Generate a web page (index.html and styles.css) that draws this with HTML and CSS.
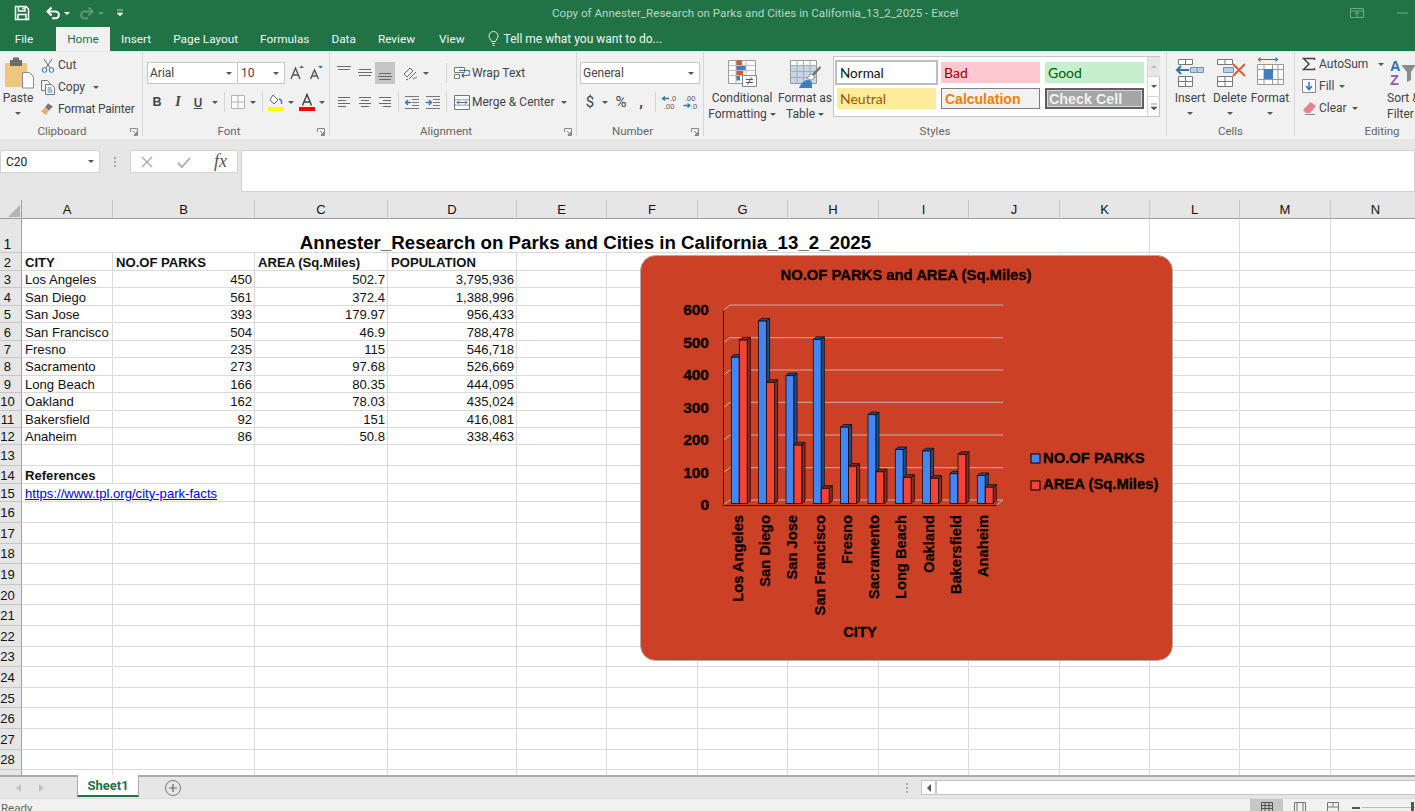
FILE: index.html
```html
<!DOCTYPE html>
<html lang="en">
<head>
<meta charset="utf-8">
<title>Excel</title>
<link rel="stylesheet" href="styles.css">
</head>
<body>
<header class="titlebar">
  <div class="qat">
    <svg class="save" width="16" height="16" viewBox="0 0 16 16"><path d="M1.5 1.5h10.5l2.5 2.5v10.500h-13zM4.500 2v4h6.500V2M4 14.500V9.500h8v5"/><path d="M9 2.500v2"/></svg>
    <svg class="undo" width="16" height="14" viewBox="0 0 16 14"><path d="M2.500 5.500h8a3.300 3.300 0 0 1 0 6.800H7M6.500 1.500l-4 4 4 4"/></svg>
    <b class="caret white"></b>
    <svg class="redo" width="16" height="14" viewBox="0 0 16 14"><path d="M13.500 5.500h-8a3.300 3.300 0 0 0 0 6.800H9M9.500 1.500l4 4-4 4"/></svg>
    <b class="caret dim"></b>
    <svg class="custom" width="8" height="8" viewBox="0 0 8 8"><path d="M1 1h6M1 4h6l-3 3z"/></svg>
  </div>
  <div class="doc-title">Copy of Annester_Research on Parks and Cities in California_13_2_2025 - Excel</div>
  <div class="win">
    <svg width="14" height="10" viewBox="0 0 14 10"><path d="M.5.5h13v9H.5zM.5 3h13M7 9V4.500M5 6l2-2 2 2"/></svg>
    <svg width="11" height="3" viewBox="0 0 11 3"><path d="M0 1h11"/></svg>
  </div>
</header>

<nav class="tabs">
  <span class="tab file">File</span>
  <span class="tab active">Home</span>
  <span class="tab">Insert</span>
  <span class="tab">Page Layout</span>
  <span class="tab">Formulas</span>
  <span class="tab">Data</span>
  <span class="tab">Review</span>
  <span class="tab view">View</span>
  <span class="tell">
    <svg width="11" height="16" viewBox="0 0 11 16"><path d="M3.500 10.500C3 8.500 1 7.500 1 5a4.500 4.500 0 0 1 9 0c0 2.500-2 3.500-2.500 5.500zM4 12.500h3M4.500 14.500h2"/></svg>
    Tell me what you want to do...
  </span>
</nav>

<section class="ribbon">
  <div class="group g-clip">
    <div class="body">
      <div class="big paste">
        <svg width="30" height="33" viewBox="0 0 30 33"><rect x="0" y="6" width="22" height="24" rx="1" fill="#efc67e"/><rect x="5" y="3" width="12" height="6" fill="#6d6d6d"/><rect x="8" y="0.500" width="6" height="4" fill="#6d6d6d"/><path d="M17.500 15.500h7l4 4v11.500h-11z" fill="#fff" stroke="#8a8a8a"/></svg>
        <span>Paste</span>
        <b class="caret"></b>
      </div>
      <div class="smalls">
        <div class="small"><svg width="14" height="15" viewBox="0 0 14 15"><path d="M3 1l6 9M11 1l-6 9" stroke="#666" fill="none"/><circle cx="3.500" cy="12" r="2.300" fill="none" stroke="#2e75b6"/><circle cx="10.500" cy="12" r="2.300" fill="none" stroke="#2e75b6"/></svg><span>Cut</span></div>
        <div class="small"><svg width="14" height="15" viewBox="0 0 14 15"><path d="M.5.5h6l2 2v2M.5.5v10h4" fill="none" stroke="#777"/><path d="M4.500 4.500h6l3 3v7h-9z" fill="#fff" stroke="#777"/><path d="M6.500 8h4M6.500 10h5M6.500 12h5" stroke="#3d7fc1"/></svg><span>Copy</span><b class="caret gap5"></b></div>
        <div class="small"><svg width="14" height="14" viewBox="0 0 14 14"><path d="M7 1.500l5 3-4 4-4-3z" fill="#777"/><path d="M4 5.500l4 3-3 4.500L0 9.500z" fill="#e3b268"/></svg><span class="tight">Format Painter</span></div>
      </div>
    </div>
    <div class="label lau">Clipboard<svg class="launch" width="8" height="8" viewBox="0 0 8 8"><path d="M.5 4V.5H7.500V7.500H4M3 3l3.500 3.500M6.500 4v2.500H4"/></svg></div>
  </div>

  <div class="group g-font">
    <div class="body column">
      <div class="row">
        <div class="select s-font">Arial<b class="caret"></b></div>
        <div class="select s-size">10<b class="caret"></b></div>
        <svg class="gap3" width="18" height="18" viewBox="0 0 18 18"><path d="M3 15L7.500 4 12 15M5 11h5" fill="none" stroke="#555" stroke-width="1.400"/><path d="M11 4l2.500-2.500L16 4z" fill="#2e75b6"/></svg>
        <svg class="gap1" width="18" height="18" viewBox="0 0 18 18"><path d="M3.500 15L7.500 6 11.500 15M5 12h5" fill="none" stroke="#555" stroke-width="1.400"/><path d="M11 2h5l-2.500 2.500z" fill="#2e75b6"/></svg>
      </div>
      <div class="row">
        <span class="ib bold">B</span>
        <span class="ib ital gap1">I</span>
        <span class="ib under">U</span>
        <b class="caret"></b>
        <i class="vsep"></i>
        <svg width="16" height="16" viewBox="0 0 16 16"><path d="M1.500 1.500h13v13h-13zM8 1.500v13M1.500 8h13" fill="#fafafa" stroke="#b5b5b5"/></svg>
        <b class="caret"></b>
        <i class="vsep"></i>
        <svg width="16" height="18" viewBox="0 0 16 18"><path d="M5 2l5 5-4 4-4-4z" fill="#fff" stroke="#666"/><path d="M11 6c2 0 3 2 2.500 5" fill="none" stroke="#2e75b6" stroke-width="1.400"/><rect y="14" width="16" height="4" fill="#ff0"/></svg>
        <b class="caret"></b>
        <svg class="gap5" width="16" height="18" viewBox="0 0 16 18"><path d="M3.500 12.500L8 1.500l4.500 11M5 9h6" fill="none" stroke="#444" stroke-width="1.500"/><rect y="14" width="16" height="4" fill="#f00"/></svg>
        <b class="caret"></b>
      </div>
    </div>
    <div class="label lau">Font<svg class="launch" width="8" height="8" viewBox="0 0 8 8"><path d="M.5 4V.5H7.500V7.500H4M3 3l3.500 3.500M6.500 4v2.500H4"/></svg></div>
  </div>

  <div class="group g-align">
    <div class="body column">
      <div class="row">
        <span class="ib"><svg class="ln" width="16" height="16" viewBox="0 0 16 16"><path d="M1 1.500h14M2 4.500h12"/></svg></span>
        <span class="ib gap1"><svg class="ln" width="16" height="16" viewBox="0 0 16 16"><path d="M2 4.500h12M1 7.500h14M2 10.500h12"/></svg></span>
        <span class="ib on"><svg class="ln" width="16" height="16" viewBox="0 0 16 16"><path d="M2 8.500h12M1 11.500h14M2 14.500h12"/></svg></span>
        <svg class="gap7 ln" width="18" height="16" viewBox="0 0 18 16"><path d="M2 9l6-6 3 3-6 6zM7 14l7-7M11 14l4-2M4 15l2-1"/></svg>
        <b class="caret gap3"></b>
        <i class="vsep v16"></i>
        <svg width="16" height="16" viewBox="0 0 16 16"><path d="M.5 2.500h10v5h-10zM.5 9.500h5v4h-5z" fill="#fff" stroke="#777"/><path d="M5 5.500h8.500a2 2 0 0 1 0 5H8M10 8.500l-2 2 2 2" fill="none" stroke="#2e75b6" stroke-width="1.200"/></svg>
        <span class="gap2">Wrap Text</span>
      </div>
      <div class="row">
        <span class="ib"><svg class="ln" width="16" height="14" viewBox="0 0 16 14"><path d="M2 2.500h12M2 5.500h8M2 8.500h12M2 11.500h8"/></svg></span>
        <span class="ib gap1"><svg class="ln" width="16" height="14" viewBox="0 0 16 14"><path d="M2 2.500h12M4 5.500h8M2 8.500h12M4 11.500h8"/></svg></span>
        <span class="ib"><svg class="ln" width="16" height="14" viewBox="0 0 16 14"><path d="M2 2.500h12M6 5.500h8M2 8.500h12M6 11.500h8"/></svg></span>
        <i class="vsep v3"></i>
        <span class="ib"><svg width="16" height="14" viewBox="0 0 16 14"><path d="M1 1.500h14M8 4.500h7M8 7.500h7M8 10.500h7M1 13.500h14" stroke="#777" fill="none"/><path d="M7 7.500H1.500M4 5L1.500 7.500 4 10" fill="none" stroke="#2e75b6" stroke-width="1.300"/></svg></span>
        <span class="ib gap1"><svg width="16" height="14" viewBox="0 0 16 14"><path d="M1 1.500h14M8 4.500h7M8 7.500h7M8 10.500h7M1 13.500h14" stroke="#777" fill="none"/><path d="M1 7.500h5.500M4 5l2.500 2.500L4 10" fill="none" stroke="#2e75b6" stroke-width="1.300"/></svg></span>
        <i class="vsep v2"></i>
        <svg width="16" height="15" viewBox="0 0 16 15"><path d="M.5.500h15v14H.5zM.5 5h15M.5 10h15" fill="#fff" stroke="#777"/><rect x="2" y="5.500" width="12" height="4" fill="#fff"/><path d="M3 7.500h10M5 5.500l-2 2 2 2M11 5.500l2 2-2 2" fill="none" stroke="#2e75b6"/></svg>
        <span class="gap2">Merge &amp; Center</span>
        <b class="caret gap7"></b>
      </div>
    </div>
    <div class="label lau">Alignment<svg class="launch" width="8" height="8" viewBox="0 0 8 8"><path d="M.5 4V.5H7.500V7.500H4M3 3l3.500 3.500M6.500 4v2.500H4"/></svg></div>
  </div>

  <div class="group g-num">
    <div class="body column">
      <div class="row"><div class="select s-num">General<b class="caret"></b></div></div>
      <div class="row numrow">
        <span class="ib16 big-glyph">$</span>
        <b class="caret"></b>
        <span class="ib16 big-glyph gap5">%</span>
        <span class="ib16 comma gap4">,</span>
        <i class="vsep"></i>
        <svg width="16" height="16" viewBox="0 0 16 16"><text x="9" y="7" class="deci">.0</text><text x="3" y="14.500" class="deci">.00</text><path d="M8 4.500H1.500M4 2.500l-2.500 2 2.500 2" fill="none" stroke="#2e75b6" stroke-width="1.300"/></svg>
        <svg class="gap5" width="16" height="16" viewBox="0 0 16 16"><text x="3" y="7" class="deci">.00</text><text x="9" y="14.500" class="deci">.0</text><path d="M1.500 11.500H8M5.500 9.500l2.500 2-2.500 2" fill="none" stroke="#2e75b6" stroke-width="1.300"/></svg>
      </div>
    </div>
    <div class="label lau">Number<svg class="launch" width="8" height="8" viewBox="0 0 8 8"><path d="M.5 4V.5H7.500V7.500H4M3 3l3.500 3.500M6.500 4v2.500H4"/></svg></div>
  </div>

  <div class="group g-styles">
    <div class="body">
      <div class="big w-cf">
        <svg width="32" height="33" viewBox="0 0 32 33"><path d="M2.500 3.500h27v23h-27z" fill="#fff" stroke="#999"/><rect x="10" y="3.500" width="6" height="5" fill="#d9572d"/><rect x="10" y="8.500" width="10" height="5" fill="#3f7fc1"/><rect x="10" y="13.500" width="7" height="5" fill="#d9572d"/><rect x="10" y="18.500" width="4" height="5" fill="#3f7fc1"/><path d="M10 3.500v23M20 3.500v23M2.500 8.500h27M2.500 13.500h27M2.500 18.500h27" stroke="#bbb" fill="none"/><path d="M16.500 18.500h14v11h-14z" fill="#fff" stroke="#888"/><path d="M20 22.500h7M20 25.500h7M25.500 20.500l-4 7" stroke="#555" fill="none"/></svg>
        <span>Conditional</span>
        <span>Formatting<b class="caret gap3"></b></span>
      </div>
      <div class="big w-fat">
        <svg width="32" height="33" viewBox="0 0 32 33"><path d="M1.500 3.500h26v23h-26z" fill="#fff" stroke="#999"/><path d="M2 9h25v17H2z" fill="#c5d6ea"/><path d="M1.500 8.500h26M1.500 14.500h26M1.500 20.500h26M8 3.500v23M14.500 3.500v23M21 3.500v23" stroke="#aaa" fill="none"/><path d="M31 9l-8 8 2 2 7-8z" fill="#777"/><path d="M23 17c-3 1-3 3-5 4l3 2c3 0 5-2 4-4z" fill="#fff" stroke="#888"/><path d="M10 31c2-5 5-8 9-8 3 0 4 2 4 4v4z" fill="#3f7fc1"/></svg>
        <span>Format as</span>
        <span>Table<b class="caret gap3"></b></span>
      </div>
      <div class="gallery">
        <div class="cells">
          <div class="st normal">Normal</div>
          <div class="st bad">Bad</div>
          <div class="st good">Good</div>
          <div class="st neutral">Neutral</div>
          <div class="st calc">Calculation</div>
          <div class="st check">Check Cell</div>
        </div>
        <div class="scroll">
          <div class="sb up"><b class="caret up-c"></b></div>
          <div class="sb"><b class="caret"></b></div>
          <div class="sb"><svg width="8" height="8" viewBox="0 0 8 8"><path d="M1 1h6M1 4h6L4 7z" fill="#555" stroke="#555" stroke-width=".6"/></svg></div>
        </div>
      </div>
    </div>
    <div class="label">Styles</div>
  </div>

  <div class="group g-cells">
    <div class="body">
      <div class="big w-cell">
        <svg width="30" height="33" viewBox="0 0 30 33"><path d="M3.500 2.500h14v5h-14zM10.500 2.500v5M3.500 19.500h14v10h-14zM10.500 19.500v10M3.500 24.500h14" fill="#fff" stroke="#777"/><path d="M15.500 10.500h13v5h-13zM22 10.500v5" fill="#b8cfe4" stroke="#6f93b5"/><path d="M14 13H2M6 9l-4 4 4 4" fill="none" stroke="#2e75b6" stroke-width="2"/></svg>
        <span>Insert</span><b class="caret"></b>
      </div>
      <div class="big w-cell">
        <svg width="30" height="33" viewBox="0 0 30 33"><path d="M2.500 2.500h15v5h-15zM10 2.500v5M2.500 19.500h15v10h-15zM10 19.500v10M2.500 24.500h15" fill="#fff" stroke="#777"/><path d="M8.500 10.500h10v5h-10z" fill="#b8cfe4" stroke="#6f93b5"/><path d="M18 7l12 12M30 7L18 19" fill="none" stroke="#d9572d" stroke-width="1.800"/></svg>
        <span>Delete</span><b class="caret"></b>
      </div>
      <div class="big w-cell">
        <svg width="30" height="33" viewBox="0 0 30 33"><path d="M3 2.500h20M6 .5L3 2.500l3 2M20 .5l3 2-3 2" fill="none" stroke="#2e75b6"/><path d="M2.500 7.500h26v20h-26zM2.500 12.500h26M2.500 22.500h26M9 7.500v20M17.500 7.500v20M23 7.500v20" fill="#fff" stroke="#999"/><rect x="9" y="12" width="9" height="10" fill="#3f7fc1"/></svg>
        <span>Format</span><b class="caret"></b>
      </div>
    </div>
    <div class="label l-cells">Cells</div>
  </div>

  <div class="group g-edit">
    <div class="body">
      <div class="smalls e-smalls">
        <div class="small"><svg width="14" height="14" viewBox="0 0 14 14"><path d="M12.500 3V1.500h-11L7 7l-5.500 5.500h11V11" fill="none" stroke="#444" stroke-width="1.500"/></svg><span>AutoSum</span><b class="caret gap10"></b></div>
        <div class="small"><svg width="14" height="14" viewBox="0 0 14 14"><path d="M.5.5h13v13H.5z" fill="#fff" stroke="#888"/><path d="M7 3v7M4 7l3 3.500L10 7" fill="none" stroke="#2e75b6" stroke-width="1.500"/></svg><span>Fill</span><b class="caret gap2"></b></div>
        <div class="small"><svg width="14" height="14" viewBox="0 0 14 14"><path d="M8.500 1L14 5l-6 7H4L1 9z" fill="#e8808f"/><path d="M3 13.500h10" stroke="#888"/></svg><span>Clear</span><b class="caret gap2"></b></div>
      </div>
      <div class="big sort">
        <svg width="28" height="33" viewBox="0 0 28 33"><text x="3" y="14" class="az a">A</text><text x="3" y="28" class="az z">Z</text><path d="M15 8h13v1l-4 6v8l-4 2V15l-5-6z" fill="#8a8a8a"/></svg>
        <span>Sort &amp;</span>
        <span>Filter</span>
      </div>
    </div>
    <div class="label">Editing</div>
  </div>
</section>

<section class="formula">
  <div class="namebox">C20<b class="caret"></b></div>
  <div class="grip"><i></i><i></i><i></i></div>
  <div class="fxbox">
    <svg width="14" height="14" viewBox="0 0 14 14"><path d="M2 2l10 10M12 2L2 12" stroke="#aaa" stroke-width="1.400"/></svg>
    <svg width="14" height="14" viewBox="0 0 14 14"><path d="M1 8l4 4 8-9" fill="none" stroke="#aaa" stroke-width="1.800"/></svg>
    <span class="fx">fx</span>
  </div>
  <div class="input"></div>
</section>

<main class="sheet">
  <div class="hd corner"><svg width="13" height="13" viewBox="0 0 13 13"><path d="M12 0v12H0z" fill="#b4b4b4"/></svg></div>
  <div class="hd">A</div><div class="hd">B</div><div class="hd">C</div><div class="hd">D</div><div class="hd">E</div><div class="hd">F</div><div class="hd">G</div><div class="hd">H</div><div class="hd">I</div><div class="hd">J</div><div class="hd">K</div><div class="hd">L</div><div class="hd">M</div><div class="hd">N</div>

  <div class="rh rh1">1</div><div class="c title">Annester_Research on Parks and Cities in California_13_2_2025</div><i></i><i></i><i></i>
  <div class="rh">2</div><div class="c h">CITY</div><div class="c h">NO.OF PARKS</div><div class="c h">AREA (Sq.Miles)</div><div class="c h">POPULATION</div><i></i><i></i><i></i><i></i><i></i><i></i><i></i><i></i><i></i><i></i>
  <div class="rh">3</div><div class="c">Los Angeles</div><div class="c n">450</div><div class="c n">502.7</div><div class="c n">3,795,936</div><i></i><i></i><i></i><i></i><i></i><i></i><i></i><i></i><i></i><i></i>
  <div class="rh">4</div><div class="c">San Diego</div><div class="c n">561</div><div class="c n">372.4</div><div class="c n">1,388,996</div><i></i><i></i><i></i><i></i><i></i><i></i><i></i><i></i><i></i><i></i>
  <div class="rh">5</div><div class="c">San Jose</div><div class="c n">393</div><div class="c n">179.97</div><div class="c n">956,433</div><i></i><i></i><i></i><i></i><i></i><i></i><i></i><i></i><i></i><i></i>
  <div class="rh">6</div><div class="c">San Francisco</div><div class="c n">504</div><div class="c n">46.9</div><div class="c n">788,478</div><i></i><i></i><i></i><i></i><i></i><i></i><i></i><i></i><i></i><i></i>
  <div class="rh">7</div><div class="c">Fresno</div><div class="c n">235</div><div class="c n">115</div><div class="c n">546,718</div><i></i><i></i><i></i><i></i><i></i><i></i><i></i><i></i><i></i><i></i>
  <div class="rh">8</div><div class="c">Sacramento</div><div class="c n">273</div><div class="c n">97.68</div><div class="c n">526,669</div><i></i><i></i><i></i><i></i><i></i><i></i><i></i><i></i><i></i><i></i>
  <div class="rh">9</div><div class="c">Long Beach</div><div class="c n">166</div><div class="c n">80.35</div><div class="c n">444,095</div><i></i><i></i><i></i><i></i><i></i><i></i><i></i><i></i><i></i><i></i>
  <div class="rh">10</div><div class="c">Oakland</div><div class="c n">162</div><div class="c n">78.03</div><div class="c n">435,024</div><i></i><i></i><i></i><i></i><i></i><i></i><i></i><i></i><i></i><i></i>
  <div class="rh">11</div><div class="c">Bakersfield</div><div class="c n">92</div><div class="c n">151</div><div class="c n">416,081</div><i></i><i></i><i></i><i></i><i></i><i></i><i></i><i></i><i></i><i></i>
  <div class="rh">12</div><div class="c">Anaheim</div><div class="c n">86</div><div class="c n">50.8</div><div class="c n">338,463</div><i></i><i></i><i></i><i></i><i></i><i></i><i></i><i></i><i></i><i></i>
  <div class="rh">13</div><i></i><i></i><i></i><i></i><i></i><i></i><i></i><i></i><i></i><i></i><i></i><i></i><i></i><i></i>
  <div class="rh">14</div><div class="c h">References</div><i></i><i></i><i></i><i></i><i></i><i></i><i></i><i></i><i></i><i></i><i></i><i></i><i></i>
  <div class="rh">15</div><div class="c link"><a href="#">https://www.tpl.org/city-park-facts</a></div><i></i><i></i><i></i><i></i><i></i><i></i><i></i><i></i><i></i><i></i><i></i><i></i>
  <div class="rh">16</div><i></i><i></i><i></i><i></i><i></i><i></i><i></i><i></i><i></i><i></i><i></i><i></i><i></i><i></i>
  <div class="rh">17</div><i></i><i></i><i></i><i></i><i></i><i></i><i></i><i></i><i></i><i></i><i></i><i></i><i></i><i></i>
  <div class="rh">18</div><i></i><i></i><i></i><i></i><i></i><i></i><i></i><i></i><i></i><i></i><i></i><i></i><i></i><i></i>
  <div class="rh">19</div><i></i><i></i><i></i><i></i><i></i><i></i><i></i><i></i><i></i><i></i><i></i><i></i><i></i><i></i>
  <div class="rh">20</div><i></i><i></i><i></i><i></i><i></i><i></i><i></i><i></i><i></i><i></i><i></i><i></i><i></i><i></i>
  <div class="rh">21</div><i></i><i></i><i></i><i></i><i></i><i></i><i></i><i></i><i></i><i></i><i></i><i></i><i></i><i></i>
  <div class="rh">22</div><i></i><i></i><i></i><i></i><i></i><i></i><i></i><i></i><i></i><i></i><i></i><i></i><i></i><i></i>
  <div class="rh">23</div><i></i><i></i><i></i><i></i><i></i><i></i><i></i><i></i><i></i><i></i><i></i><i></i><i></i><i></i>
  <div class="rh">24</div><i></i><i></i><i></i><i></i><i></i><i></i><i></i><i></i><i></i><i></i><i></i><i></i><i></i><i></i>
  <div class="rh">25</div><i></i><i></i><i></i><i></i><i></i><i></i><i></i><i></i><i></i><i></i><i></i><i></i><i></i><i></i>
  <div class="rh">26</div><i></i><i></i><i></i><i></i><i></i><i></i><i></i><i></i><i></i><i></i><i></i><i></i><i></i><i></i>
  <div class="rh">27</div><i></i><i></i><i></i><i></i><i></i><i></i><i></i><i></i><i></i><i></i><i></i><i></i><i></i><i></i>
  <div class="rh">28</div><i></i><i></i><i></i><i></i><i></i><i></i><i></i><i></i><i></i><i></i><i></i><i></i><i></i><i></i>
  <div class="rh"></div><i></i><i></i><i></i><i></i><i></i><i></i><i></i><i></i><i></i><i></i><i></i><i></i><i></i><i></i>

  <svg class="chart" width="533" height="406" viewBox="640 255 533 406">
    <rect class="plate" x="640.500" y="255.500" width="532" height="405" rx="15"/>
    <text class="ct" x="906" y="280" text-anchor="middle">NO.OF PARKS and AREA (Sq.Miles)</text>
    <g class="grid">
      <path d="M723.500 310L730 305H1003M723.500 342.500L730 337.700H1003M723.500 375L730 370H1003M723.500 407.500L730 402.300H1003M723.500 440L730 435H1003M723.500 472.500L730 467.700H1003M723.500 505L730 500H1003L997 505"/>
    </g>
    <path class="axis" d="M723.500 310V505.500H997"/>
    <g class="yl" text-anchor="end">
      <text x="709" y="315">600</text><text x="709" y="347.500">500</text><text x="709" y="380">400</text><text x="709" y="412.500">300</text><text x="709" y="445">200</text><text x="709" y="477.500">100</text><text x="709" y="510">0</text>
    </g>

    <g class="bar blue" transform="translate(731.300 503.500)"><rect y="-146.500" width="8" height="146.500"/><path class="s" d="M8 0V-146.500l3-2.500V-2.500z"/><path class="t" d="M0-146.500l3-2.500h8l-3 2.500z"/></g>
    <g class="bar red" transform="translate(739.300 503.500)"><rect y="-163.600" width="8" height="163.600"/><path class="s" d="M8 0V-163.600l3-2.500V-2.500z"/><path class="t" d="M0-163.600l3-2.500h8l-3 2.500z"/></g>
    <g class="bar blue" transform="translate(758.600 503.500)"><rect y="-182.600" width="8" height="182.600"/><path class="s" d="M8 0V-182.600l3-2.500V-2.500z"/><path class="t" d="M0-182.600l3-2.500h8l-3 2.500z"/></g>
    <g class="bar red" transform="translate(766.600 503.500)"><rect y="-121.200" width="8" height="121.200"/><path class="s" d="M8 0V-121.200l3-2.500V-2.500z"/><path class="t" d="M0-121.200l3-2.500h8l-3 2.500z"/></g>
    <g class="bar blue" transform="translate(786 503.500)"><rect y="-127.900" width="8" height="127.900"/><path class="s" d="M8 0V-127.900l3-2.500V-2.500z"/><path class="t" d="M0-127.900l3-2.500h8l-3 2.500z"/></g>
    <g class="bar red" transform="translate(794 503.500)"><rect y="-58.600" width="8" height="58.600"/><path class="s" d="M8 0V-58.600l3-2.500V-2.500z"/><path class="t" d="M0-58.600l3-2.500h8l-3 2.500z"/></g>
    <g class="bar blue" transform="translate(813.300 503.500)"><rect y="-164.100" width="8" height="164.100"/><path class="s" d="M8 0V-164.100l3-2.500V-2.500z"/><path class="t" d="M0-164.100l3-2.500h8l-3 2.500z"/></g>
    <g class="bar red" transform="translate(821.300 503.500)"><rect y="-15.300" width="8" height="15.300"/><path class="s" d="M8 0V-15.300l3-2.500V-2.500z"/><path class="t" d="M0-15.300l3-2.500h8l-3 2.500z"/></g>
    <g class="bar blue" transform="translate(840.600 503.500)"><rect y="-76.500" width="8" height="76.500"/><path class="s" d="M8 0V-76.500l3-2.500V-2.500z"/><path class="t" d="M0-76.500l3-2.500h8l-3 2.500z"/></g>
    <g class="bar red" transform="translate(848.600 503.500)"><rect y="-37.400" width="8" height="37.400"/><path class="s" d="M8 0V-37.400l3-2.500V-2.500z"/><path class="t" d="M0-37.400l3-2.500h8l-3 2.500z"/></g>
    <g class="bar blue" transform="translate(868 503.500)"><rect y="-88.900" width="8" height="88.900"/><path class="s" d="M8 0V-88.900l3-2.500V-2.500z"/><path class="t" d="M0-88.900l3-2.500h8l-3 2.500z"/></g>
    <g class="bar red" transform="translate(876 503.500)"><rect y="-31.800" width="8" height="31.800"/><path class="s" d="M8 0V-31.800l3-2.500V-2.500z"/><path class="t" d="M0-31.800l3-2.500h8l-3 2.500z"/></g>
    <g class="bar blue" transform="translate(895.300 503.500)"><rect y="-54" width="8" height="54"/><path class="s" d="M8 0V-54l3-2.500V-2.500z"/><path class="t" d="M0-54l3-2.500h8l-3 2.500z"/></g>
    <g class="bar red" transform="translate(903.300 503.500)"><rect y="-26.200" width="8" height="26.200"/><path class="s" d="M8 0V-26.200l3-2.500V-2.500z"/><path class="t" d="M0-26.200l3-2.500h8l-3 2.500z"/></g>
    <g class="bar blue" transform="translate(922.600 503.500)"><rect y="-52.700" width="8" height="52.700"/><path class="s" d="M8 0V-52.700l3-2.500V-2.500z"/><path class="t" d="M0-52.700l3-2.500h8l-3 2.500z"/></g>
    <g class="bar red" transform="translate(930.600 503.500)"><rect y="-25.400" width="8" height="25.400"/><path class="s" d="M8 0V-25.400l3-2.500V-2.500z"/><path class="t" d="M0-25.400l3-2.500h8l-3 2.500z"/></g>
    <g class="bar blue" transform="translate(950 503.500)"><rect y="-29.900" width="8" height="29.900"/><path class="s" d="M8 0V-29.900l3-2.500V-2.500z"/><path class="t" d="M0-29.900l3-2.500h8l-3 2.500z"/></g>
    <g class="bar red" transform="translate(958 503.500)"><rect y="-49.200" width="8" height="49.200"/><path class="s" d="M8 0V-49.200l3-2.500V-2.500z"/><path class="t" d="M0-49.200l3-2.500h8l-3 2.500z"/></g>
    <g class="bar blue" transform="translate(977.300 503.500)"><rect y="-28" width="8" height="28"/><path class="s" d="M8 0V-28l3-2.500V-2.500z"/><path class="t" d="M0-28l3-2.500h8l-3 2.500z"/></g>
    <g class="bar red" transform="translate(985.300 503.500)"><rect y="-16.500" width="8" height="16.500"/><path class="s" d="M8 0V-16.500l3-2.500V-2.500z"/><path class="t" d="M0-16.500l3-2.500h8l-3 2.500z"/></g>

    <g class="xl" text-anchor="end">
      <text transform="translate(742.500 515) rotate(-90)">Los Angeles</text>
      <text transform="translate(769.500 515) rotate(-90)">San Diego</text>
      <text transform="translate(797 515) rotate(-90)">San Jose</text>
      <text transform="translate(824.500 515) rotate(-90)">San Francisco</text>
      <text transform="translate(851.500 515) rotate(-90)">Fresno</text>
      <text transform="translate(879 515) rotate(-90)">Sacramento</text>
      <text transform="translate(906 515) rotate(-90)">Long Beach</text>
      <text transform="translate(933.500 515) rotate(-90)">Oakland</text>
      <text transform="translate(960.500 515) rotate(-90)">Bakersfield</text>
      <text transform="translate(988 515) rotate(-90)">Anaheim</text>
    </g>
    <text class="ct" x="860" y="637" text-anchor="middle">CITY</text>
    <rect class="lg blue-f" x="1031" y="454" width="9" height="9"/>
    <text class="ct" x="1043" y="463">NO.OF PARKS</text>
    <rect class="lg red-f" x="1031" y="481" width="9" height="9"/>
    <text class="ct" x="1043" y="489">AREA (Sq.Miles)</text>
  </svg>
</main>

<section class="sheetbar">
  <span class="arrow left"></span>
  <span class="arrow right"></span>
  <div class="sheet-tab">Sheet1</div>
  <svg class="plus" width="18" height="18" viewBox="0 0 18 18"><circle cx="9" cy="9" r="7.500" fill="none" stroke="#777"/><path d="M9 5v8M5 9h8" stroke="#666" stroke-width="1.200"/></svg>
  <div class="grip g2"><i></i><i></i><i></i></div>
  <div class="hscroll"><span class="hbtn"><b></b></span></div>
</section>

<footer class="status">
  <span class="ready">Ready</span>
  <div class="views">
    <span class="vbtn on"><svg width="12" height="10" viewBox="0 0 12 10"><path d="M.5.500h11v9H.5zM.5 3.500h11M.5 6.500h11M4 .5v9M8 .5v9" fill="none" stroke="#555"/></svg></span>
    <span class="vbtn"><svg width="12" height="10" viewBox="0 0 12 10"><path d="M.5.500h11v9H.5zM3 .5v9M9 .5v9" fill="none" stroke="#777"/></svg></span>
    <span class="vbtn"><svg width="12" height="10" viewBox="0 0 12 10"><path d="M.5.500h11v9H.5zM.5 5h11M6 .5v4.500" fill="none" stroke="#777"/></svg></span>
    <i class="minus"></i>
    <span class="slider"><i></i></span>
  </div>
</footer>
</body>
</html>
```

FILE: styles.css
```css
* { box-sizing: border-box; }
html, body { margin: 0; padding: 0; }
body {
  width: 1415px; height: 811px; overflow: hidden; background: #e6e6e6;
  font-family: Roboto, "Open Sans", sans-serif; font-size: 12px; color: #444;
  display: flex; flex-direction: column;
}
svg { display: block; flex: none; }
.caret {
  display: inline-block; flex: none; width: 0; height: 0; margin-left: 4px;
  border-left: 3px solid transparent; border-right: 3px solid transparent; border-top: 3px solid #555;
  vertical-align: middle;
}
.caret.white { border-top-color: #fff; margin-left: 3px; }
.caret.dim { border-top-color: #5c9b7a; margin-left: 3px; }
.gap1 { margin-left: 1px; } .gap2 { margin-left: 2px; } .gap3 { margin-left: 3px; }
.gap4 { margin-left: 4px; } .gap5 { margin-left: 5px; } .gap7 { margin-left: 7px; }
.gap10 { margin-left: 7px; }
.tight { letter-spacing: -.2px; }

/* title bar */
.titlebar { height: 26px; background: #217346; display: flex; align-items: center; color: #b7d5c4; flex: none; }
.qat { display: flex; align-items: center; width: 552px; padding-left: 14px; }
.save path { fill: none; stroke: #fff; stroke-width: 1.500; }
.undo { margin-left: 15px; }
.undo path { fill: none; stroke: #fff; stroke-width: 2; }
.redo { margin-left: 9px; }
.redo path { fill: none; stroke: #5c9b7a; stroke-width: 2; }
.custom { margin-left: 12px; }
.custom path { fill: #dfeae4; stroke: #dfeae4; stroke-width: .8; }
.doc-title { white-space: nowrap; font-size: 11.600px; }
.win { margin-left: auto; display: flex; align-items: center; gap: 33px; padding-right: 7px; }
.win path { fill: none; stroke: #6fa98a; }

/* tabs */
.tabs { height: 25px; background: #217346; display: flex; align-items: flex-end; color: #f0f6f2; font-size: 11.800px; flex: none; }
.tab { height: 24px; padding: 0 11px; display: flex; align-items: center; white-space: nowrap; }
.tab.file { width: 48px; margin-right: 8px; justify-content: center; padding: 0; }
.tab.active { background: #f1f1f1; color: #217346; width: 54px; justify-content: center; padding: 0; }
.tab.view { margin-left: 2px; }
.tell { height: 24px; display: flex; align-items: center; gap: 5px; margin-left: 12px; white-space: nowrap; font-size: 12px; }
.tell path { fill: none; stroke: #e6f0ea; }

/* ribbon */
.ribbon { height: 88px; background: #f1f1f1; display: flex; flex: none; border-top: 1px solid #e4e4e4; overflow: hidden; }
.group { display: flex; flex-direction: column; border-right: 1px solid #d6d6d6; flex: none; height: 84px; }
.body { flex: 1; display: flex; min-height: 0; }
.body.column { flex-direction: column; padding-top: 10px; gap: 7px; }
.label { height: 15px; position: relative; text-align: center; color: #666; font-size: 11.500px; line-height: 21px; flex: none; }
.label.lau { padding-right: 18px; }
.label.l-cells { padding-right: 3px; }
.launch { position: absolute; right: 4px; top: 7px; }
.launch path { fill: none; stroke: #888; }
.g-clip { width: 143px; }
.g-font { width: 187px; padding-left: 4px; }
.g-align { width: 247px; padding-left: 4px; }
.g-num { width: 127px; padding-left: 3px; }
.g-styles { width: 463px; }
.g-cells { width: 128px; padding-left: 3px; }
.g-edit { width: 174px; border-right: 0; }
.big { display: flex; flex-direction: column; align-items: center; padding-top: 5px; line-height: 15.500px; white-space: nowrap; flex: none; }
.big svg { margin-bottom: 1px; }
.big > .caret { margin: 5px 0 0; }
.paste { width: 36px; }
.paste svg { margin-left: 4px; }
.smalls { display: flex; flex-direction: column; padding: 2px 0 0 5px; }
.small { height: 22px; display: flex; align-items: center; gap: 3px; white-space: nowrap; }
.row { display: flex; align-items: center; height: 22px; white-space: nowrap; }
.select { height: 22px; background: #fff; border: 1px solid #c6c6c6; display: flex; align-items: center; justify-content: space-between; padding: 0 5px 0 2px; flex: none; }
.select .caret { margin: 0; }
.s-font { width: 91px; }
.s-size { width: 47px; margin-left: 0; border-left-width: 0; padding-left: 3px; }
.s-num { width: 120px; }
.ib { width: 20px; height: 22px; display: flex; align-items: center; justify-content: center; flex: none; font-style: normal; }
.ib.on { background: #c6c6c6; }
.bold { font-family: "Liberation Sans", sans-serif; font-weight: 700; font-size: 12.500px; }
.ital { font-family: "Liberation Serif", serif; font-style: italic; font-weight: 700; font-size: 14px; }
.under { text-decoration: underline; font-weight: 500; font-size: 13px; }
.vsep { width: 1px; height: 20px; background: #d4d4d4; margin: 0 5px 0 6px; flex: none; }
.vsep.v16 { margin: 0 7px 0 17px; }
.vsep.v3 { margin: 0 3px 0 3px; }
.vsep.v2 { margin: 0 7px 0 3px; }
.ln { fill: none; stroke: #6a6a6a; }
.numrow { padding-left: 2px; }
.ib16 { width: 16px; text-align: center; flex: none; }
.big-glyph { font-size: 15px; }
.comma { font-weight: 700; font-size: 15px; line-height: 10px; }
.deci { font: 7.500px "Liberation Sans", sans-serif; fill: #555; }
.w-cf { width: 76px; }
.w-fat { width: 50px; }
.gallery { margin: 4px 0 0 3px; width: 327px; height: 61px; background: #fff; border: 1px solid #c6c6c6; display: flex; flex: none; }
.cells { display: grid; grid-template-columns: repeat(3, 99px); grid-template-rows: 21px 21px; gap: 5px; padding: 5px 0 0 3px; }
.st { font-family: Lato, sans-serif; font-size: 14px; display: flex; align-items: center; padding-left: 3px; white-space: nowrap; }
.normal { background: #fff; color: #111; box-shadow: 0 0 0 2px #bdbdbd; font-size: 13.500px; }
.bad { background: #ffc7ce; color: #9c0006; }
.good { background: #c6efce; color: #006100; }
.neutral { background: #ffeb9c; color: #9c5700; }
.calc { background: #f2f2f2; color: #fa7d00; font: 700 14px "Liberation Sans", sans-serif; border: 1px solid #7f7f7f; }
.check { background: #a5a5a5; color: #f2f2f2; font: 700 14.300px "Liberation Sans", sans-serif; border: 2px solid #5f5f5f; box-shadow: inset 0 0 0 1px #d8d8d8; padding-left: 2px; }
.scroll { margin-left: 3px; width: 13px; display: flex; flex-direction: column; flex: none; border-left: 1px solid #d6d6d6; }
.sb { flex: 1; display: flex; align-items: center; justify-content: center; border-bottom: 1px solid #d6d6d6; }
.sb:last-child { border-bottom: 0; }
.sb.up { background: #e6e6e6; }
.sb .caret { margin: 0; }
.up-c { border-top: 0 !important; border-bottom: 3px solid #bbb; }
.w-cell { width: 40px; }
.e-smalls { padding: 1px 0 0 7px; width: 92px; }
.sort { align-items: flex-start; }
.az { font: 700 14.500px "Liberation Sans", sans-serif; }
.az.a { fill: #2e75b6; }
.az.z { fill: #8e5bb5; }

/* formula bar */
.formula { height: 61px; background: #e6e6e6; display: flex; align-items: flex-start; padding-top: 11px; flex: none; }
.namebox { width: 100px; height: 23px; background: #fff; border: 1px solid #d2d2d2; display: flex; align-items: center; justify-content: space-between; padding: 0 5px; color: #222; flex: none; }
.namebox .caret { margin: 0; }
.grip { width: 30px; height: 23px; display: flex; flex-direction: column; align-items: center; justify-content: center; gap: 2px; flex: none; }
.grip i { width: 2px; height: 2px; background: #aaa; }
.fxbox { width: 108px; height: 23px; background: #fff; border: 1px solid #d2d2d2; display: flex; align-items: center; gap: 23px; padding-left: 9px; flex: none; }
.fx { font: italic 18px "Liberation Serif", serif; color: #555; }
.input { flex: 1; height: 42px; margin-left: 3px; background: #fff; border: 1px solid #d2d2d2; }

/* sheet */
.sheet {
  position: relative; height: 575px; width: 1415px; overflow: hidden; flex: none; background: #fff;
  display: grid;
  grid-template-columns: 22px 91px 142px 133px 129px 90px 91px 90px 91px 90px 91px 90px 90px 91px 90px;
  grid-template-rows: 19px 34px 18px repeat(10, 17.440px) 21px 18px 18px repeat(13, 20.600px) 6px;
  font-family: "Liberation Sans", Arial, sans-serif; font-size: 13.100px; color: #111;
}
.hd { background: #e6e6e6; border-right: 1px solid #c6c6c6; border-bottom: 1px solid #9f9f9f; display: flex; align-items: center; justify-content: center; color: #111; font-size: 13px; }
.corner { align-items: flex-start; justify-content: flex-start; padding: 5px 0 0 8px; border-right-color: #9f9f9f; }
.rh { background: #e6e6e6; border-right: 1px solid #9f9f9f; border-bottom: 1px solid #c6c6c6; display: flex; align-items: center; justify-content: center; padding: 1px 6px 0 0; color: #111; overflow: hidden; }
.rh1 { align-items: flex-end; font-size: 14px; }
.sheet i, .c { border-right: 1px solid #dadada; border-bottom: 1px solid #dadada; display: block; }
.c { display: flex; align-items: center; padding: 1px 2px 0 3px; white-space: nowrap; overflow: hidden; }
.h { font-weight: 700; }
.n { justify-content: flex-end; }
.title { grid-column: span 11; justify-content: center; align-items: flex-end; font-weight: 700; font-size: 18.700px; line-height: 18px; color: #000; padding: 0; }
.link { grid-column: span 2; }
.link a { color: #0000ee; text-decoration: underline; }

/* chart */
.chart { position: absolute; left: 640px; top: 55px; }
.plate { fill: #cc4125; stroke: #b5aaa5; stroke-width: 1; }
.grid path { fill: none; stroke: #bdb3ae; stroke-width: 1; }
.axis { fill: none; stroke: #2a120c; stroke-width: 1; }
.ct { font: 700 14.800px "Liberation Sans", sans-serif; fill: #000; stroke: #000; stroke-width: .3; }
.yl text { font: 700 15.500px "Liberation Sans", sans-serif; fill: #000; stroke: #000; stroke-width: .3; }
.xl text { font: 700 14.700px "Liberation Sans", sans-serif; fill: #000; stroke: #000; stroke-width: .2; }
.bar rect, .bar path { stroke: #140a08; stroke-width: .8; }
.blue rect { fill: #4285f4; }
.blue .s, .blue .t { fill: #1f4e8c; }
.red rect { fill: #f44336; }
.red .s, .red .t { fill: #8e2a1e; }
.lg { stroke: #000; stroke-width: 1; }
.blue-f { fill: #4285f4; }
.red-f { fill: #f44336; }

/* sheet tabs */
.sheetbar { height: 23px; background: #e6e6e6; border-top: 2px solid #ababab; display: flex; align-items: center; position: relative; flex: none; }
.arrow { width: 0; height: 0; border-top: 4px solid transparent; border-bottom: 4px solid transparent; flex: none; }
.arrow.left { margin-left: 16px; border-right: 5px solid #c2c2c2; }
.arrow.right { margin-left: 18px; border-left: 5px solid #c2c2c2; }
.sheet-tab { margin: -2px 0 0 33px; width: 62px; height: 22px; background: #fff; border: 1px solid #ababab; border-top: 0; border-bottom: 2px solid #217346; color: #217346; font-weight: 700; font-size: 13px; display: flex; align-items: center; justify-content: center; align-self: flex-start; flex: none; }
.plus { margin-left: 25px; }
.g2 { margin-left: 718px; width: 14px; }
.hscroll { margin-left: 7px; flex: 1; height: 15px; background: #fff; border: 1px solid #c6c6c6; border-right: 0; display: flex; }
.hbtn { width: 15px; border-right: 2px solid #c6c6c6; display: flex; align-items: center; justify-content: center; flex: none; }
.hbtn b { width: 0; height: 0; border-top: 4px solid transparent; border-bottom: 4px solid transparent; border-right: 4px solid #555; }

/* status */
.status { height: 13px; background: #f1f1f1; border-top: 1px solid #dcdcdc; display: flex; overflow: hidden; flex: none; color: #666; font-size: 11.500px; }
.ready { padding: 2px 0 0 1px; line-height: 14px; }
.views { margin-left: auto; display: flex; align-items: flex-start; }
.vbtn { width: 33px; height: 13px; display: flex; justify-content: center; padding-top: 3px; }
.vbtn.on { background: #c6c6c6; }
.minus { width: 8px; height: 2px; background: #555; margin: 8px 0 0 3px; }
.slider { width: 53px; height: 1px; background: #bbb; margin: 8px 0 0 2px; position: relative; }
.slider i { position: absolute; left: 49px; top: -5px; width: 3px; height: 10px; background: #555; }
```
